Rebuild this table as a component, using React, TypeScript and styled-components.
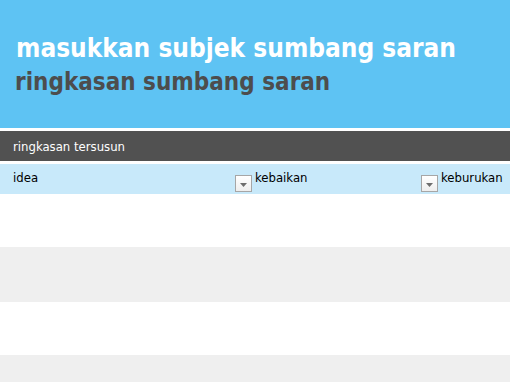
import styled, { createGlobalStyle } from "styled-components";

const GlobalStyle = createGlobalStyle`
  html, body {
    margin: 0;
    padding: 0;
    background: #ffffff;
  }
  body {
    font-family: "DejaVu Sans Condensed", "DejaVu Sans", Verdana, sans-serif;
  }
`;

const Page = styled.div`
  width: 510px;
  height: 382px;
  overflow: hidden;
  display: flex;
  flex-direction: column;

  & > * {
    flex-shrink: 0;
  }
`;

const Header = styled.header`
  height: 128px;
  background-color: #5ec3f3;
  box-sizing: border-box;
  padding: 30px 0 0 16px;
  margin-bottom: 3px;
`;

const Title = styled.h1`
  margin: 0;
  font-size: 26px;
  font-weight: bold;
  color: #ffffff;
  line-height: 36px;
`;

const Subtitle = styled.h2`
  margin: 0 0 0 -1px;
  font-size: 24px;
  font-weight: bold;
  color: #4d4d4d;
  line-height: 32px;
`;

const SectionBar = styled.div`
  height: 30px;
  background-color: #515151;
  color: #ffffff;
  font-size: 13px;
  display: flex;
  align-items: center;
  padding-left: 13px;
  margin-bottom: 3px;
`;

const HeaderRow = styled.div`
  height: 30px;
  background-color: #c8e9fa;
  display: flex;
`;

const HeadCell = styled.div<{ $width?: number; $pad: number }>`
  ${(p) => (p.$width ? `width: ${p.$width}px;` : "flex: 1;")}
  box-sizing: border-box;
  padding-left: ${(p) => p.$pad}px;
  display: flex;
  justify-content: space-between;
  font-size: 13px;
  color: #000000;
`;

const Label = styled.span`
  padding-top: 6px;
`;

const DropButton = styled.span`
  align-self: flex-end;
  width: 17px;
  height: 17px;
  box-sizing: border-box;
  margin: 0 1px 2px 0;
  border: 1px solid #a6a6a6;
  background: linear-gradient(#ffffff, #eeeeee);
  display: flex;
  align-items: center;
  justify-content: center;
  padding-top: 2px;
`;

const Row = styled.div<{ $alt: boolean; $height: number }>`
  height: ${(p) => p.$height}px;
  background-color: ${(p) => (p.$alt ? "#efefef" : "#ffffff")};
`;

function Arrow() {
  return (
    <svg width="7" height="4" viewBox="0 0 7 4">
      <path d="M0 0 H7 L3.5 4 Z" fill="#6d6d6d" />
    </svg>
  );
}

const columns = [
  { label: "idea", width: 253, pad: 13, drop: true },
  { label: "kebaikan", width: 186, pad: 2, drop: true },
  { label: "keburukan", pad: 2, drop: false },
];

const rowHeights = [53, 55, 53, 55];

export default function App() {
  return (
    <Page>
      <GlobalStyle />
      <Header>
        <Title>masukkan subjek sumbang saran</Title>
        <Subtitle>ringkasan sumbang saran</Subtitle>
      </Header>
      <SectionBar>ringkasan tersusun</SectionBar>
      <HeaderRow>
        {columns.map((col) => (
          <HeadCell key={col.label} $width={col.width} $pad={col.pad}>
            <Label>{col.label}</Label>
            {col.drop && (
              <DropButton>
                <Arrow />
              </DropButton>
            )}
          </HeadCell>
        ))}
      </HeaderRow>
      {rowHeights.map((h, i) => (
        <Row key={i} $alt={i % 2 === 1} $height={h} />
      ))}
    </Page>
  );
}
